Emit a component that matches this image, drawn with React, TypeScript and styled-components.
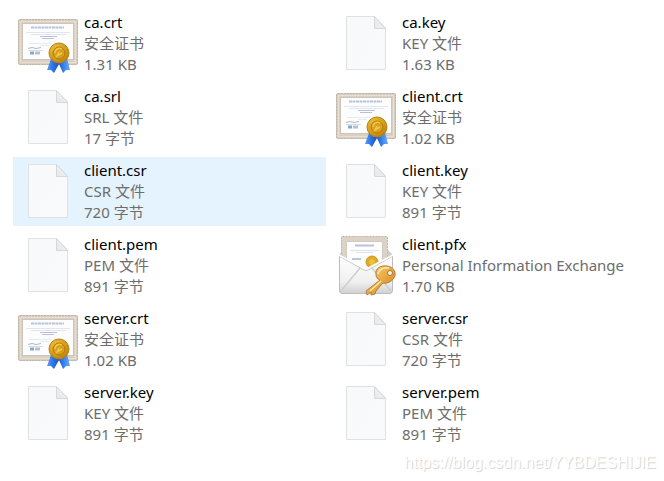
import React from "react";
import styled, { createGlobalStyle } from "styled-components";

type IconKind = "blank" | "certificate" | "envelope";

interface FileEntry {
  name: string;
  type: string;
  size: string;
  icon: IconKind;
  hovered?: boolean;
}

const files: FileEntry[] = [
  { name: "ca.crt", type: "安全证书", size: "1.31 KB", icon: "certificate" },
  { name: "ca.key", type: "KEY 文件", size: "1.63 KB", icon: "blank" },
  { name: "ca.srl", type: "SRL 文件", size: "17 字节", icon: "blank" },
  { name: "client.crt", type: "安全证书", size: "1.02 KB", icon: "certificate" },
  { name: "client.csr", type: "CSR 文件", size: "720 字节", icon: "blank", hovered: true },
  { name: "client.key", type: "KEY 文件", size: "891 字节", icon: "blank" },
  { name: "client.pem", type: "PEM 文件", size: "891 字节", icon: "blank" },
  { name: "client.pfx", type: "Personal Information Exchange", size: "1.70 KB", icon: "envelope" },
  { name: "server.crt", type: "安全证书", size: "1.02 KB", icon: "certificate" },
  { name: "server.csr", type: "CSR 文件", size: "720 字节", icon: "blank" },
  { name: "server.key", type: "KEY 文件", size: "891 字节", icon: "blank" },
  { name: "server.pem", type: "PEM 文件", size: "891 字节", icon: "blank" },
];

const GlobalStyle = createGlobalStyle`
  *, *::before, *::after { box-sizing: border-box; }
  body {
    margin: 0;
    background: #fff;
    font-family: "Noto Sans", "Noto Sans CJK SC", sans-serif;
  }
`;

const Page = styled.main`
  display: flex;
  flex-direction: column;
  padding: 9px 20px 0 13px;
`;

const FileGrid = styled.ul`
  display: grid;
  grid-template-columns: repeat(2, minmax(0, 1fr));
  gap: 5px;
  margin: 0;
  padding: 0;
  list-style: none;
`;

const Tile = styled.li<{ $hovered?: boolean }>`
  display: flex;
  align-items: center;
  gap: 4px;
  padding: 3px;
  background: ${({ $hovered }) => ($hovered ? "#e5f3ff" : "transparent")};
`;

const IconArt = styled.svg`
  flex: none;
  width: 64px;
  height: 63px;
`;

const Details = styled.div`
  min-width: 0;
  font-size: 15px;
  line-height: 21px;
  white-space: nowrap;
`;

const Name = styled.div`
  color: #000;
`;

const Meta = styled.div`
  color: #6d6d6d;
`;

const Watermark = styled.a`
  align-self: flex-end;
  margin: 5px -12px 0 0;
  color: #fff;
  font-family: "Liberation Sans", Arial, sans-serif;
  font-size: 16px;
  line-height: 20px;
  text-decoration: none;
  text-shadow: 1px 1px 1px #d2d2d2;
`;

function BlankIcon({ id }: { id: string }) {
  return (
    <IconArt viewBox="0 0 64 63" aria-hidden="true">
      <defs>
        <linearGradient id={`${id}-paper`} x1="0" y1="0" x2="1" y2="1">
          <stop offset="0" stopColor="#f8f9fa" />
          <stop offset="1" stopColor="#f9fafb" />
        </linearGradient>
        <linearGradient id={`${id}-fold`} x1="0" y1="1" x2="1" y2="0">
          <stop offset="0" stopColor="#e6e7e8" />
          <stop offset="1" stopColor="#f6f6f6" />
        </linearGradient>
      </defs>
      <path d="M12.5 4.5H40.5L51.5 16V57.5H12.5Z" fill={`url(#${id}-paper)`} stroke="#dfe2e4" strokeLinejoin="round" />
      <path d="M40.5 4.5V16.5H51.5Z" fill={`url(#${id}-fold)`} stroke="#d6d8da" strokeLinejoin="round" />
    </IconArt>
  );
}

function CertificateIcon({ id }: { id: string }) {
  return (
    <IconArt viewBox="0 0 64 63" aria-hidden="true">
      <defs>
        <radialGradient id={`${id}-gold`} cx="0.35" cy="0.3" r="0.8">
          <stop offset="0" stopColor="#f0c33c" />
          <stop offset="0.55" stopColor="#d79f1c" />
          <stop offset="1" stopColor="#b57c0c" />
        </radialGradient>
        <linearGradient id={`${id}-ribbon`} x1="0" y1="0" x2="1" y2="0">
          <stop offset="0" stopColor="#5d9ff5" />
          <stop offset="0.25" stopColor="#2c74ea" />
          <stop offset="0.5" stopColor="#1b55c8" />
          <stop offset="0.75" stopColor="#3d86f2" />
          <stop offset="1" stopColor="#6cabfa" />
        </linearGradient>
      </defs>
      <rect x="2" y="7" width="60" height="46" rx="2" fill="#d9cfc2" />
      <rect x="2.5" y="7.5" width="59" height="45" rx="1.5" fill="none" stroke="#bdb2a4" strokeDasharray="2 1" />
      <rect x="4.5" y="9.5" width="55" height="41" fill="none" stroke="#e6dfd5" />
      <rect x="6.5" y="11.5" width="51" height="36" fill="#fdfdfe" stroke="#cdc5ba" />
      <g fill="none">
        <path d="M15 15.5H48" stroke="#b9c3dd" strokeWidth="2" strokeDasharray="3 .5" />
        <path d="M10 20.5H54M15 22.5H50" stroke="#e1e5ee" />
        <path d="M24 24.5H41M26 26.5H38" stroke="#b8bfda" />
        <path d="M13 31.5H35M24 33.5H33" stroke="#e6eaf2" />
        <path d="M12 36.5L16 35.5L20 36.5L25 35.5" stroke="#b1b7c2" />
        <path d="M12 38.5H27" stroke="#d8dce2" />
        <path d="M14 41H18" stroke="#83a9cd" strokeWidth="3" />
        <path d="M19 41H24" stroke="#b3c1d0" strokeWidth="3" />
      </g>
      <path d="M35 47L31 58L35 58L38 61L43 52L47 61L50 58L54 58L51 46Z" fill={`url(#${id}-ribbon)`} />
      <circle cx="43" cy="41" r="10" fill={`url(#${id}-gold)`} stroke="#b98312" strokeWidth="1" />
      <circle cx="43" cy="41" r="6" fill="#d9a01b" stroke="#b17a0b" />
      <path d="M39 41C39 37 43 35 46 37M43 40L41 44L46 41" fill="none" stroke="#f0c650" strokeWidth="1.5" />
    </IconArt>
  );
}

function EnvelopeIcon({ id }: { id: string }) {
  return (
    <IconArt viewBox="0 0 64 63" aria-hidden="true">
      <defs>
        <linearGradient id={`${id}-envelope`} x1="0" y1="0" x2="0" y2="1">
          <stop offset="0" stopColor="#fff" />
          <stop offset="0.7" stopColor="#f0f0f0" />
          <stop offset="1" stopColor="#d2d2d3" />
        </linearGradient>
        <linearGradient id={`${id}-key`} x1="0" y1="0" x2="1" y2="1">
          <stop offset="0" stopColor="#fbd680" />
          <stop offset="0.5" stopColor="#e8ab42" />
          <stop offset="1" stopColor="#be7a22" />
        </linearGradient>
      </defs>
      <path d="M5 21L9 16H54L59 21L57 60H7Z" fill="#d0d0d0" />
      <rect x="7.5" y="2.5" width="46" height="42" rx="1" fill="#dcd2c5" />
      <rect x="7.5" y="2.5" width="46" height="42" rx="1" fill="none" stroke="#bfb4a6" strokeDasharray="2 1" />
      <rect x="12.5" y="7.5" width="36" height="36" fill="#fefefe" stroke="#d2cabf" />
      <path d="M21 11.5H40" stroke="#b9c3dd" strokeWidth="2" />
      <path d="M16 16.5H45M22 18.5H39" stroke="#dde2ed" />
      <path d="M18 25H27" stroke="#b9c7d8" strokeWidth="2" />
      <circle cx="38" cy="28" r="6" fill="#e0aa24" stroke="#c9971d" />
      <circle cx="38" cy="28" r="3" fill="#edbf45" />
      <path d="M5 21L30 34Q32 36 34 34L59 21V56Q59 59 56 59H8Q5 59 5 56Z" fill={`url(#${id}-envelope)`} />
      <path d="M5.5 22V56Q5.5 59.5 8 59.5H56Q58.5 59.5 58.5 56V22" fill="none" stroke="#bdbdbe" />
      <path d="M7 57L26 34M57 57L38 34" fill="none" stroke="#cfcfd0" strokeWidth="1.5" />
      <path d="M5 22L30 36Q32 37 34 36L59 22" fill="none" stroke="#c8c8c9" />
      <path d="M5 21L30 34Q32 36 34 34L59 21" fill="none" stroke="#fff" strokeWidth="1.5" />
      <path
        d="M42 40C41 35 46 31 53 32C59 33 62 37 61 42C59 47 54 50 49 49L42 57L41 60L37 61V58L33 61L32 57L46 46C43 45 42 43 42 40Z"
        fill={`url(#${id}-key)`}
        stroke="#b9803a"
        strokeLinejoin="round"
      />
      <path d="M44 40C45 35 50 33 55 34M47 47L36 57" fill="none" stroke="#ffe7ac" strokeWidth="1.5" />
      <circle cx="56" cy="39" r="2.5" fill="#f4f1ea" stroke="#ad7630" />
    </IconArt>
  );
}

const icons = {
  blank: BlankIcon,
  certificate: CertificateIcon,
  envelope: EnvelopeIcon,
};

function FileTile({ file }: { file: FileEntry }) {
  const Icon = icons[file.icon];
  return (
    <Tile $hovered={file.hovered}>
      <Icon id={file.name.replace(".", "-")} />
      <Details>
        <Name>{file.name}</Name>
        <Meta>{file.type}</Meta>
        <Meta>{file.size}</Meta>
      </Details>
    </Tile>
  );
}

export default function App() {
  return (
    <>
      <GlobalStyle />
      <Page>
        <FileGrid>
          {files.map((file) => (
            <FileTile key={file.name} file={file} />
          ))}
        </FileGrid>
        <Watermark href="https://blog.csdn.net/YYBDESHIJIE">https://blog.csdn.net/YYBDESHIJIE</Watermark>
      </Page>
    </>
  );
}
